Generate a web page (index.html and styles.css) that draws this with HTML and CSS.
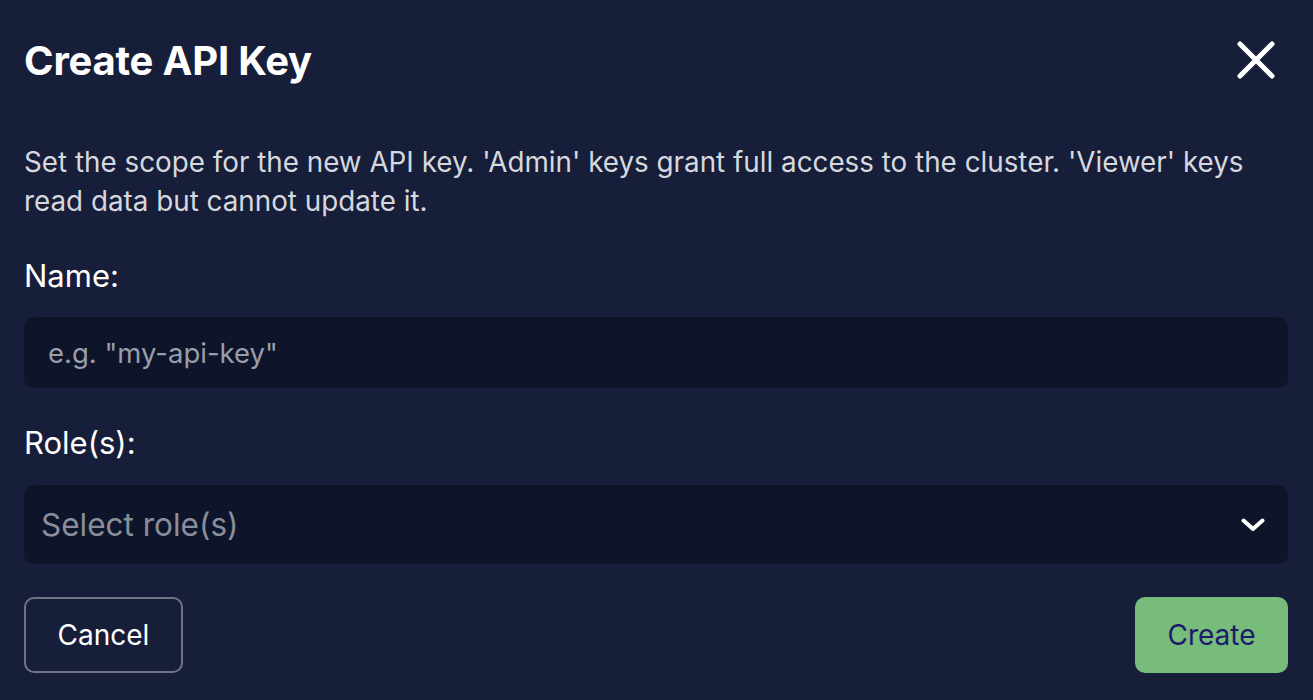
FILE: index.html
```html
<!DOCTYPE html>
<html>
<head>
<meta charset="utf-8">
<link rel="stylesheet" href="styles.css">
</head>
<body>
<div class="dialog">
  <div class="header">
    <h1 class="title">Create API Key</h1>
    <button class="close" aria-label="Close">
      <svg width="38" height="38" viewBox="0 0 38 38"><path d="M3 3 L35 35 M35 3 L3 35" stroke="#fff" stroke-width="5" stroke-linecap="round" fill="none"/></svg>
    </button>
  </div>
  <p class="desc">Set the scope for the new API key. 'Admin' keys grant full access to the cluster. 'Viewer' keys read data but cannot update it.</p>
  <label class="label">Name:</label>
  <div class="input"><span class="placeholder">e.g. "my-api-key"</span></div>
  <label class="label label-role">Role(s):</label>
  <div class="select">
    <span class="select-ph">Select role(s)</span>
    <svg width="24" height="14" viewBox="0 0 24 14"><path d="M2.5 2.5 L12 11 L21.5 2.5" stroke="#fff" stroke-width="4" stroke-linecap="round" stroke-linejoin="round" fill="none"/></svg>
  </div>
  <div class="actions">
    <button class="btn btn-cancel">Cancel</button>
    <button class="btn btn-create">Create</button>
  </div>
</div>
</body>
</html>
```
FILE: styles.css
```css
html, body {
  margin: 0;
  padding: 0;
  background: #171e39;
  font-family: Inter, "Noto Sans", sans-serif;
}
.dialog {
  width: 1313px;
  height: 700px;
  box-sizing: border-box;
  padding: 0 25px 0 24px;
  display: flex;
  flex-direction: column;
}
.header {
  display: flex;
  justify-content: space-between;
  align-items: center;
  height: 120px;
}
.title {
  margin: 0;
  color: #fff;
  font-size: 40px;
  font-weight: 700;
  letter-spacing: -0.2px;
}
.close {
  background: none;
  border: none;
  padding: 0;
  margin-right: 13px;
  display: flex;
}
.desc {
  margin: 23px 0 0 0;
  color: #d6d8df;
  font-size: 27.8px;
  line-height: 39px;
}
.label {
  display: block;
  color: #fff;
  font-size: 31px;
  margin-top: 35px;
  line-height: 40px;
}
.input {
  margin-top: 21px;
  height: 71px;
  background: #0e1429;
  border-radius: 10px;
  display: flex;
  align-items: center;
  padding-left: 24px;
}
.placeholder {
  color: #9a9eab;
  font-size: 27.5px;
}
.label-role {
  margin-top: 35px;
}
.select {
  margin-top: 22px;
  height: 79px;
  background: #0e1429;
  border-radius: 10px;
  display: flex;
  align-items: center;
  justify-content: space-between;
  padding: 0 23px 0 17px;
}
.select-ph {
  color: #8a8e9b;
  font-size: 31.5px;
}
.actions {
  display: flex;
  justify-content: space-between;
  margin-top: 33px;
}
.btn {
  font-family: Inter, "Noto Sans", sans-serif;
  font-size: 28px;
  height: 76px;
  border-radius: 10px;
  cursor: pointer;
}
.btn-cancel {
  width: 159px;
  background: transparent;
  color: #fff;
  border: 2px solid #6f7585;
}
.btn-create {
  width: 153px;
  background: #77bc7b;
  color: #1e1a6b;
  border: none;
}
```
